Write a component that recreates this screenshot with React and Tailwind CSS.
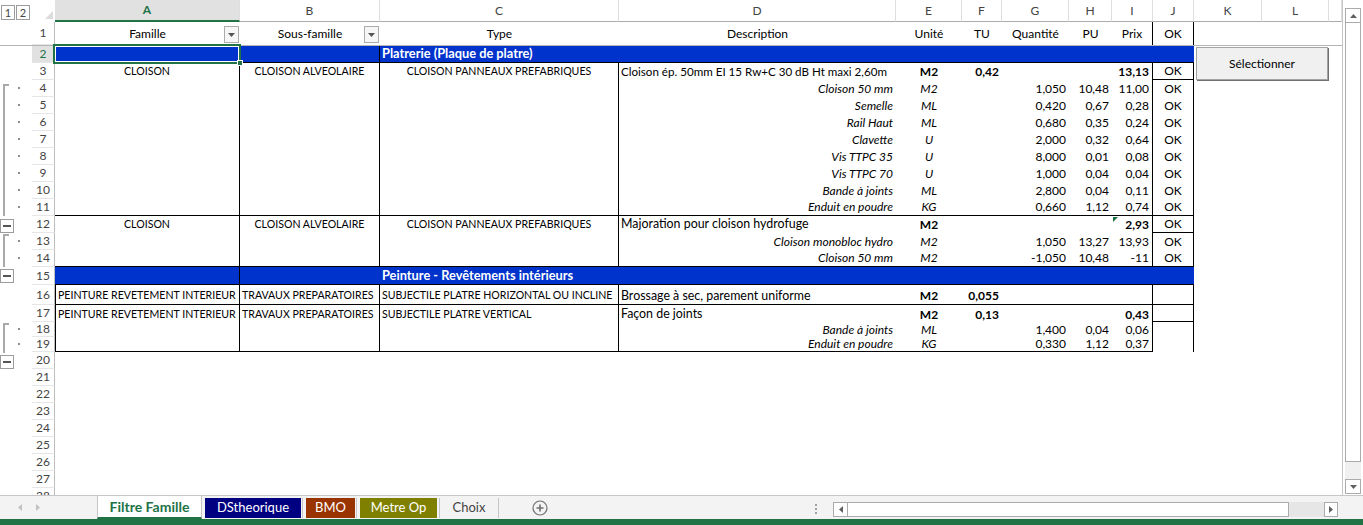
import React from "react";

// column widths (A..M), measured from the screenshot
const W = {
  A: "w-[185px]",
  B: "w-[140px]",
  C: "w-[239px]",
  D: "w-[277px]",
  E: "w-[66px]",
  F: "w-[40px]",
  G: "w-[67px]",
  H: "w-[43px]",
  I: "w-[41px]",
  J: "w-[41px]",
  K: "w-[68px]",
  L: "w-[67px]",
  M: "w-[13px]",
};
const COLS = ["A", "B", "C", "D", "E", "F", "G", "H", "I", "J", "K", "L", "M"];
const ALL = ["A", "B", "C", "D", "E", "F", "G", "H", "I", "J"];
const TO_I = ["A", "B", "C", "D", "E", "F", "G", "H", "I"];
const VB = ["A", "B", "C", "I", "J"];

const ALIGN = {
  l: "justify-start pl-[2px]",
  c: "justify-center",
  r: "justify-end pr-[3px]",
};

const c = (t, x = {}) => ({ t, a: "c", ...x });
const l = (t, x = {}) => ({ t, a: "l", ...x });
const r = (t, x = {}) => ({ t, a: "r", ...x });

// upper-case labels are set a bit smaller: Lato capitals run wider than Calibri's
const cloison = {
  A: c("CLOISON", { u: true }),
  B: c("CLOISON ALVEOLAIRE", { u: true }),
  C: c("CLOISON PANNEAUX PREFABRIQUES", { u: true }),
};
const peinture = {
  A: l("PEINTURE REVETEMENT INTERIEUR", { u: true }),
  B: l("TRAVAUX PREPARATOIRES", { u: true }),
};

const det = (d, e, g, h, i, ok = true) => ({
  D: r(d, { i: true }),
  E: c(e, { i: true }),
  G: r(g),
  H: r(h),
  I: r(i),
  ...(ok ? { J: c("OK") } : {}),
});

const ROWS = [
  { n: 2, band: true, sel: true, vb: ["B"], hb: ["B", "C", "D", "E", "F", "G", "H", "I", "J"], v: { C: l("Platrerie (Plaque de platre)") } },
  {
    n: 3,
    hb: ["J"],
    v: {
      ...cloison,
      D: l("Cloison ép. 50mm EI 15 Rw+C 30 dB Ht maxi 2,60m", { n: true }),
      E: c("M2", { b: true }),
      F: r("0,42", { b: true }),
      I: r("13,13", { b: true }),
      J: c("OK"),
    },
  },
  { n: 4, v: det("Cloison 50 mm", "M2", "1,050", "10,48", "11,00") },
  { n: 5, v: det("Semelle", "ML", "0,420", "0,67", "0,28") },
  { n: 6, v: det("Rail Haut", "ML", "0,680", "0,35", "0,24") },
  { n: 7, v: det("Clavette", "U", "2,000", "0,32", "0,64") },
  { n: 8, v: det("Vis TTPC 35", "U", "8,000", "0,01", "0,08") },
  { n: 9, v: det("Vis TTPC 70", "U", "1,000", "0,04", "0,04") },
  { n: 10, v: det("Bande à joints", "ML", "2,800", "0,04", "0,11") },
  { n: 11, hb: ALL, v: det("Enduit en poudre", "KG", "0,660", "1,12", "0,74") },
  {
    n: 12,
    hb: ["J"],
    v: {
      ...cloison,
      D: l("Majoration pour cloison hydrofuge", { w: true }),
      E: c("M2", { b: true }),
      I: r("2,93", { b: true }),
      J: c("OK"),
    },
  },
  { n: 13, v: det("Cloison monobloc hydro", "M2", "1,050", "13,27", "13,93") },
  { n: 14, hb: ALL, v: det("Cloison 50 mm", "M2", "-1,050", "10,48", "-11") },
  { n: 15, h: "h-[18px]", band: true, vb: ["A"], hb: ALL, v: { C: l("Peinture - Revêtements intérieurs") } },
  {
    n: 16,
    h: "h-[20px]",
    pad: "pt-[3px]",
    leftA: true,
    hb: ALL,
    v: {
      ...peinture,
      C: l("SUBJECTILE PLATRE HORIZONTAL OU INCLINE", { u: true }),
      D: l("Brossage à sec, parement uniforme", { w: true }),
      E: c("M2", { b: true }),
      F: r("0,055", { b: true }),
    },
  },
  {
    n: 17,
    pad: "pt-[2px]",
    leftA: true,
    hb: ["J"],
    v: {
      ...peinture,
      C: l("SUBJECTILE PLATRE VERTICAL", { u: true }),
      D: l("Façon de joints", { w: true }),
      E: c("M2", { b: true }),
      F: r("0,13", { b: true }),
      I: r("0,43", { b: true }),
    },
  },
  { n: 18, h: "h-[15px]", leftA: true, v: det("Bande à joints", "ML", "1,400", "0,04", "0,06", false) },
  { n: 19, h: "h-[15px]", leftA: true, hb: TO_I, v: det("Enduit en poudre", "KG", "0,330", "1,12", "0,37", false) },
  ...[20, 21, 22, 23, 24, 25, 26, 27, 28].map((n) => ({ n, vb: [] })),
];

function RowHead({ n, sel }) {
  return (
    <div
      className={`flex h-full w-[23px] shrink-0 items-center justify-center border-r border-b border-r-[#bdbdbd] border-b-[#e6e6e6] text-[12px] ${
        sel ? "bg-[#e1e1e1] text-[#217346]" : "text-[#444]"
      }`}
    >
      {n}
    </div>
  );
}

function sizeOf(s, inBand) {
  if (inBand) return "text-[12.8px]";
  if (!s) return "";
  if (s.u) return "text-[10.6px]";
  if (s.n) return "text-[11.6px]";
  if (s.w) return "text-[12.4px]";
  return "";
}

function SheetRow({ row }) {
  const { n, h = "h-[17px]", pad = "", v = {}, vb = VB, hb = [], band, leftA, sel } = row;
  return (
    <div className={`flex shrink-0 ${h}`}>
      <RowHead n={n} sel={sel} />
      {COLS.map((col) => {
        const s = v[col];
        const inBand = band && ALL.includes(col);
        const cls = [
          W[col],
          "flex h-full shrink-0 items-center overflow-hidden whitespace-nowrap border-black",
          pad ? pad : s?.u ? "pt-px" : "",
          vb.includes(col) ? "border-r" : "",
          hb.includes(col) ? "border-b" : "",
          leftA && col === "A" ? "border-l" : "",
          inBand ? "bg-[#0033cc] text-white font-bold" : "text-black",
          sizeOf(s, inBand),
          s ? ALIGN[s.a] : "",
          s?.b ? "font-bold" : "",
          s?.i ? "italic" : "",
        ].join(" ");
        return (
          <div key={col} className={cls}>
            {s?.t}
          </div>
        );
      })}
    </div>
  );
}

function FilterButton() {
  return (
    <div className="absolute top-[4px] right-[1px] flex h-[17px] w-[15px] items-center justify-center border border-[#acacac] bg-[#f6f6f6]">
      <svg width="7" height="4" viewBox="0 0 7 4">
        <path d="M0 0h7L3.5 4z" fill="#555" />
      </svg>
    </div>
  );
}

function ColumnHeader() {
  return (
    <div className="flex h-[22px] shrink-0">
      <div className="flex w-[23px] shrink-0 items-end justify-end pr-[2px] pb-[3px]">
        <svg width="8" height="8" viewBox="0 0 8 8">
          <path d="M8 0v8H0z" fill="#dcdcdc" />
        </svg>
      </div>
      {COLS.map((col) => (
        <div
          key={col}
          className={`${W[col]} flex shrink-0 items-center justify-center border-r border-r-[#dedede] text-[12px] ${
            col === "A"
              ? "border-b-2 border-b-[#217346] bg-[#e1e1e1] font-bold text-[#217346]"
              : "border-b border-b-[#ababab] text-[#444]"
          }`}
        >
          {col === "M" ? "" : col}
        </div>
      ))}
    </div>
  );
}

function TitleRow() {
  const t = {
    A: "Famille",
    B: "Sous-famille",
    C: "Type",
    D: "Description",
    E: "Unité",
    F: "TU",
    G: "Quantité",
    H: "PU",
    I: "Prix",
    J: "OK",
  };
  return (
    <div className="flex h-[23px] shrink-0">
      <RowHead n={1} />
      {COLS.map((col) => (
        <div
          key={col}
          className={`${W[col]} relative flex h-full shrink-0 items-center justify-center whitespace-nowrap border-black pt-px text-black ${
            col === "I" || col === "J" ? "border-r" : ""
          }`}
        >
          {t[col]}
          {(col === "A" || col === "B") && <FilterButton />}
        </div>
      ))}
    </div>
  );
}

function Gutter() {
  const dots = [65, 82, 99, 116, 133, 150, 167, 184, 218, 235, 306, 321];
  const minus = [197, 247, 333];
  return (
    <div className="flex w-[32px] shrink-0 flex-col">
      <div className="flex h-[22px] shrink-0 items-start gap-px pt-[5px] pl-px">
        <div className="flex h-[15px] w-[14px] items-center justify-center border border-[#9c9c9c] text-[11px] leading-none text-[#444]">1</div>
        <div className="flex h-[15px] w-[14px] items-center justify-center border border-[#9c9c9c] text-[11px] leading-none text-[#444]">2</div>
      </div>
      <svg width="32" height="473" viewBox="0 0 32 473">
        <rect x="0" y="23" width="32" height="1" fill="#b4b4b4" />
        {/* group brackets */}
        <rect x="3" y="62" width="6" height="2" fill="#a9a9a9" />
        <rect x="3" y="62" width="2" height="132" fill="#a9a9a9" />
        <rect x="3" y="212" width="6" height="2" fill="#a9a9a9" />
        <rect x="3" y="212" width="2" height="33" fill="#a9a9a9" />
        <rect x="3" y="301" width="6" height="2" fill="#a9a9a9" />
        <rect x="3" y="301" width="2" height="30" fill="#a9a9a9" />
        {dots.map((y) => (
          <rect key={y} x="18" y={y} width="2" height="2" fill="#8e8e8e" />
        ))}
        {minus.map((y) => (
          <g key={y}>
            <rect x="0.5" y={y + 0.5} width="13" height="13" fill="#fff" stroke="#9c9c9c" />
            <rect x="3" y={y + 6} width="8" height="2" fill="#555" />
          </g>
        ))}
      </svg>
    </div>
  );
}

function VScroll() {
  return (
    <div className="flex h-[495px] w-[20px] shrink-0 flex-col px-[2px] pt-[8px] pb-px">
      <div className="flex h-[15px] shrink-0 items-center justify-center border border-[#ababab] bg-white">
        <svg width="7" height="4" viewBox="0 0 7 4">
          <path d="M0 4h7L3.5 0z" fill="#606060" />
        </svg>
      </div>
      <div className="h-[439px] shrink-0 border border-t-0 border-[#ababab] bg-white" />
      <div className="flex-1 bg-[#f0f0f0]" />
      <div className="flex h-[15px] shrink-0 items-center justify-center border border-[#ababab] bg-white">
        <svg width="7" height="4" viewBox="0 0 7 4">
          <path d="M0 0h7L3.5 4z" fill="#606060" />
        </svg>
      </div>
    </div>
  );
}

function TabBar() {
  return (
    <div className="flex h-[24px] shrink-0 border-t border-[#c6c6c6] bg-[#f3f3f3] text-[13px]">
      <div className="flex w-[97px] shrink-0 items-center gap-[14px] pl-[18px]">
        <svg width="4" height="7" viewBox="0 0 4 7">
          <path d="M4 0v7L0 3.5z" fill="#c2c2c2" />
        </svg>
        <svg width="4" height="7" viewBox="0 0 4 7">
          <path d="M0 0v7l4-3.5z" fill="#c2c2c2" />
        </svg>
      </div>
      <div className="flex w-[105px] shrink-0 items-center justify-center border-r border-b-2 border-l border-r-[#c6c6c6] border-b-[#217346] border-l-[#c6c6c6] bg-white text-[14px] font-bold text-[#217346]">
        Filtre Famille
      </div>
      <div className="mt-[2px] ml-[3px] flex h-[20px] w-[96px] shrink-0 items-center justify-center bg-[#000080] text-white">
        DStheorique
      </div>
      <div className="mt-[2px] ml-px h-[20px] w-px shrink-0 bg-[#c6c6c6]" />
      <div className="mt-[2px] ml-[3px] flex h-[20px] w-[49px] shrink-0 items-center justify-center bg-[#993300] text-white">
        BMO
      </div>
      <div className="mt-[2px] ml-px h-[20px] w-px shrink-0 bg-[#c6c6c6]" />
      <div className="mt-[2px] ml-[3px] flex h-[20px] w-[77px] shrink-0 items-center justify-center bg-[#808000] text-white">
        Metre Op
      </div>
      <div className="mt-[2px] ml-[2px] h-[20px] w-px shrink-0 bg-[#c6c6c6]" />
      <div className="flex w-[58px] shrink-0 items-center justify-center text-[#444]">Choix</div>
      <div className="mt-[2px] h-[20px] w-px shrink-0 bg-[#c6c6c6]" />
      <div className="ml-[33px] flex w-[16px] shrink-0 items-center justify-center">
        <svg width="16" height="16" viewBox="0 0 16 16">
          <circle cx="8" cy="8" r="7" fill="none" stroke="#6f6f6f" strokeWidth="1.2" />
          <path d="M8 4.5v7M4.5 8h7" stroke="#6f6f6f" strokeWidth="1.6" />
        </svg>
      </div>
      <div className="flex-1" />
      <div className="flex w-[2px] shrink-0 flex-col gap-[2px] pt-[8px]">
        <div className="h-[2px] w-[2px] bg-[#a0a0a0]" />
        <div className="h-[2px] w-[2px] bg-[#a0a0a0]" />
        <div className="h-[2px] w-[2px] bg-[#a0a0a0]" />
      </div>
      <div className="mt-[6px] ml-[16px] mr-[25px] flex h-[15px] w-[505px] shrink-0">
        <div className="flex w-[15px] shrink-0 items-center justify-center border border-[#ababab] bg-white">
          <svg width="4" height="7" viewBox="0 0 4 7">
            <path d="M4 0v7L0 3.5z" fill="#606060" />
          </svg>
        </div>
        <div className="w-[441px] shrink-0 border border-l-0 border-[#ababab] bg-white" />
        <div className="flex-1 bg-[#e6e6e6]" />
        <div className="flex w-[14px] shrink-0 items-center justify-center border border-[#ababab] bg-white">
          <svg width="4" height="7" viewBox="0 0 4 7">
            <path d="M0 0v7l4-3.5z" fill="#606060" />
          </svg>
        </div>
      </div>
    </div>
  );
}

export default function App() {
  return (
    <div className="flex h-[525px] w-[1363px] flex-col overflow-hidden bg-white font-['Lato',sans-serif] text-[12px]">
      <div className="flex h-[495px] shrink-0">
        <div className="relative flex h-[495px] w-[1343px] shrink-0 overflow-hidden border-r border-[#c6c6c6]">
          <Gutter />
          <div className="flex w-[1310px] shrink-0 flex-col">
            <ColumnHeader />
            <TitleRow />
            <div className="h-px shrink-0 bg-[#b4b4b4]" />
            {ROWS.map((row) => (
              <SheetRow key={row.n} row={row} />
            ))}
          </div>

          {/* selected cell A2 */}
          <div className="absolute top-[44px] left-[53px] h-[20px] w-[188px] border-2 border-[#217346] shadow-[inset_0_0_0_1px_#fff]" />
          <div className="absolute top-[60px] left-[237px] h-[6px] w-[6px] border border-white bg-[#217346]" />

          {/* error indicator on I12 */}
          <svg className="absolute top-[217px] left-[1113px]" width="5" height="5" viewBox="0 0 5 5">
            <path d="M0 0h5L0 5z" fill="#1e7145" />
          </svg>

          {/* form button */}
          <div className="absolute top-[47px] left-[1196px] flex h-[33px] w-[132px] items-center justify-center border border-[#a3a3a3] bg-[#f0f0f0] text-[12px] text-black shadow-[1px_1px_0_#707070]">
            Sélectionner
          </div>
        </div>
        <VScroll />
      </div>
      <TabBar />
      <div className="h-[6px] shrink-0 bg-[#217346]" />
    </div>
  );
}
